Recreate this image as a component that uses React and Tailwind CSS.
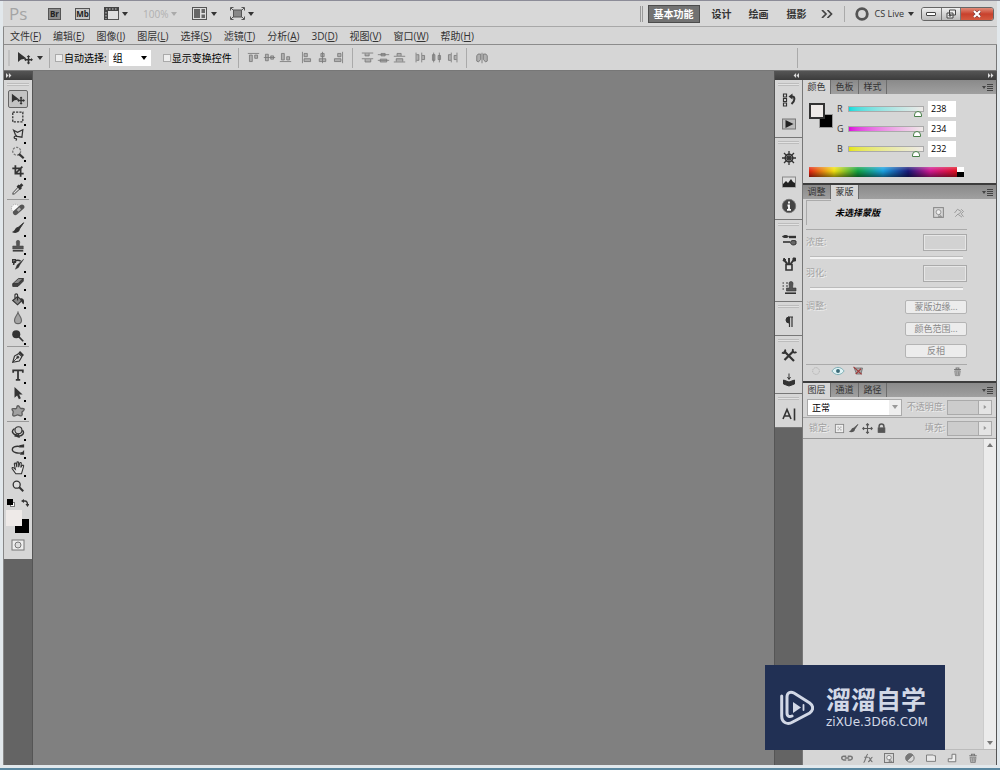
import { useState } from 'react';

const menus = [
  ['文件', 'F'],
  ['编辑', 'E'],
  ['图像', 'I'],
  ['图层', 'L'],
  ['选择', 'S'],
  ['滤镜', 'T'],
  ['分析', 'A'],
  ['3D', 'D'],
  ['视图', 'V'],
  ['窗口', 'W'],
  ['帮助', 'H']
];

const icons = {
  move: (
    <>
      <path d="M1 2v10l3-2.500 5.500-1z" fill="currentColor" stroke="none" />
      <path d="M11.500 6v7.500M8 9.700h7" strokeWidth="1.500" />
      <path d="M11.500 5l1.800 2h-3.600zM11.500 14.600l1.800-2h-3.600zM7 9.700l2-1.600v3.200zM16 9.700l-2-1.600v3.200z" fill="currentColor" stroke="none" />
    </>
  ),
  marquee: <rect x="2" y="2.500" width="11.500" height="11" strokeDasharray="2.500 1.300" strokeWidth="1.500" />,
  lasso: <path d="M3 2.500l4.500 2.500L13.500 2l-1 8.500-5.500-1L5 7.500zM6.500 9.500C3 8.500 3 12 5 12s1.500 1 .5 2.500" strokeWidth="1.400" />,
  wand: (
    <>
      <circle cx="6.500" cy="6" r="4.500" strokeDasharray="2.500 1.500" strokeWidth="1.500" stroke="#777" />
      <path d="M9 9l5.500 5" strokeWidth="2.600" />
    </>
  ),
  crop: <path d="M5 1.500v9.500h9.500M1.500 5H11v9.500M6 10l7-7" strokeWidth="2" />,
  eyedropper: (
    <>
      <path d="M8.500 5.500l-6 6.500-.5 2 2-.5 6.500-6" fill="#ddd" />
      <path d="M7.500 4L11.500 8M9.500 6L13 2.500" strokeWidth="3.200" />
    </>
  ),
  heal: (
    <>
      <circle cx="5" cy="6" r="4.500" strokeDasharray="1.500 1" fill="#f8f8f8" stroke="#999" />
      <path d="M5 11L12.500 4.500" stroke="#555" strokeWidth="5.500" strokeLinecap="round" />
      <path d="M7.500 9l3-3" stroke="#aaa" strokeWidth="3" />
    </>
  ),
  brush: (
    <>
      <path d="M14.500 2L8 7.500l1.500 2z" fill="currentColor" />
      <path d="M8.500 7c-4-.5-3 4.500-7.500 5.500 4 2.500 9 .5 9-3z" fill="currentColor" stroke="none" />
    </>
  ),
  stamp: (
    <>
      <path d="M6 3.500a2 2 0 014 0L9.500 8H14v3.500H2V8h4.500z" fill="#555" stroke="#444" strokeWidth=".6" />
      <path d="M2 13.500h12" strokeWidth="1.700" />
    </>
  ),
  history: (
    <>
      <path d="M14.500 2.500L10 9l-1.500 3-3.500 2L7 9z" fill="currentColor" strokeWidth=".5" />
      <path d="M3 9c0-5 4-6 8-4.500M2 3h3v3H2z" strokeWidth="1.700" />
    </>
  ),
  eraser: (
    <>
      <path d="M2 10l6.500-6H14l-6 6z" fill="#888" />
      <path d="M2 10h6l6-6v3l-6 6H2z" fill="#444" />
    </>
  ),
  bucket: (
    <>
      <path d="M2 8.500L7.500 4l5 4.500-5 5z" fill="#888" strokeWidth="1.300" />
      <path d="M7.500 8.500V2.500a1.500 1.500 0 00-3 0V6" strokeWidth="1.300" />
      <path d="M11 6c4 0 4.500 3 3.500 7-2.500-1-2-4-4-5z" fill="currentColor" stroke="none" />
    </>
  ),
  blur: <path d="M8 1.500C7 5 4 7 4 10.500a4 4 0 008 0C12 7 9 5 8 1.500z" fill="#a4a4a4" stroke="#666" strokeWidth="1.300" />,
  dodge: (
    <>
      <circle cx="6" cy="6" r="4.600" fill="currentColor" stroke="none" />
      <path d="M8.500 8.500L14 14" strokeWidth="1.900" />
    </>
  ),
  pen: (
    <>
      <path d="M2 14l2-7 5-3 3.500 3.500-3 5z" fill="#d9d9d9" strokeWidth="1.300" />
      <path d="M2 14l5.500-5.500" />
      <path d="M9.500 2l4.500 4.500" strokeWidth="2.400" />
      <circle cx="7.800" cy="8.200" r="1.200" fill="currentColor" />
    </>
  ),
  type: <path d="M2.500 5.500V2.800h11v2.700M8 3v10.500M5.500 13.500h5" strokeWidth="2" />,
  arrow: <path d="M4 1v12.500l3-2.700 2 4.200 2.300-1-2-4.200h4z" fill="currentColor" stroke="none" />,
  shape: <path d="M8 2c2 0 1.500 2.500 3 3s4.500-.5 4 1.500-3 2-2.500 3.500.5 4-1.500 3.500S9 12.500 7.500 12.500s-3.500 2-5 1 .5-4 0-5-2-2-1-3 3.300.5 4.500-.3S6 2 8 2z" fill="#a0a0a0" stroke="#5c5c5c" strokeWidth="1.500" />,
  rotate3d: (
    <>
      <circle cx="8.500" cy="6" r="4" fill="#ccc" strokeWidth="1.300" />
      <path d="M4 4C-.5 7 2 11 7 11.500M13 6c3 3 0 7-4.500 6.500M4 12.500h5M9 10l-2 3 3 1" strokeWidth="1.600" />
    </>
  ),
  camera3d: (
    <>
      <path d="M10 4C5 3 1 5 1.500 8c.5 3 7 4.500 11 3" strokeWidth="1.600" />
      <path d="M9.500 2.500l5.500-1v3.500H9.500z" fill="currentColor" stroke="none" />
      <path d="M15 8v5.500h-5z" fill="currentColor" stroke="none" />
    </>
  ),
  hand: <path d="M5.500 14.500L1.500 9c-1-1.600.8-2.200 1.700-1L5 9.500 3.800 3.500c-.2-1.500 1.700-1.600 2-.2L6.700 7V2c0-1.300 1.900-1.300 2 0L8.800 7l1.200-4.500c.3-1.300 2-1 1.800.4L11.200 7.500l1.500-2.300c.8-1 2.200-.3 1.700.9L12 14.500z" fill="#e4e4e4" strokeWidth="1.200" />,
  zoom: (
    <>
      <circle cx="6.500" cy="6.500" r="4" fill="#ddd" strokeWidth="1.500" />
      <path d="M9.500 9.500L14 14" strokeWidth="2.300" />
    </>
  ),
  mask: (
    <>
      <rect x="2" y="3" width="12" height="10" fill="#eee" stroke="#777" />
      <circle cx="8" cy="8" r="3" fill="#ddd" stroke="#777" />
    </>
  ),
  states: (
    <>
      <path d="M2.500 2h3v3h-3zM2.500 6.500h3v3h-3zM2.500 11h3v3h-3z" fill="#ddd" strokeWidth="1.200" />
      <path d="M10 4.500h1c3 0 3.500 4-.5 7.500" strokeWidth="2" />
      <path d="M11.500 1.500L7.500 4.500l4 3z" fill="currentColor" stroke="none" />
    </>
  ),
  play: (
    <>
      <rect x="1.500" y="3" width="13" height="10" fill="#bbb" stroke="#777" />
      <path d="M4.500 4v8L12.500 8z" fill="#222" stroke="none" />
    </>
  ),
  wheel: (
    <>
      <circle cx="8" cy="8" r="3.800" strokeWidth="1.500" />
      <path d="M8 1v14M1 8h14M3 3l10 10M13 3L3 13" strokeWidth="1.300" />
    </>
  ),
  histogram: (
    <>
      <rect x="1.500" y="3" width="13" height="10" fill="#ddd" stroke="#888" />
      <path d="M2 13v-3l3-3 2 2 3-4 2 3 2 1v4z" fill="#222" stroke="none" />
    </>
  ),
  info: (
    <>
      <circle cx="8" cy="8" r="6.700" fill="#444" stroke="#777" />
      <path d="M8 3.500v2M6.500 7.500H8v4M6 11.800h4" stroke="#fff" strokeWidth="1.800" />
    </>
  ),
  brushes: (
    <>
      <path d="M1 4.500C3 2.500 6 2.500 8 4.500c-2 2-5 2-7 0z" fill="currentColor" stroke="none" />
      <path d="M8 5h7" strokeWidth="2.400" />
      <path d="M2 10h7" strokeWidth="1.600" />
      <path d="M15 9c-3-1-5.500-.5-5.500 1.500S12.500 14 15 12z" strokeWidth="1" fill="#666" />
    </>
  ),
  presets: (
    <>
      <path d="M5 8.500h6V14H5z" fill="#ddd" strokeWidth="1.600" />
      <path d="M6.500 8L3 4M8 8V2M9.500 8L13 3.500" strokeWidth="1.900" />
      <path d="M2 5l1-3 2 2zM12 2h2.500v3H12z" fill="currentColor" />
    </>
  ),
  cloneSource: (
    <>
      <path d="M1.500 3h1.500M5 3h2M1.500 6h1.500M5 6h2M1.500 9h1.500" />
      <path d="M8 3.500a2 2 0 014 0L11.500 8H15v3H5.500V8h3z" fill="#555" strokeWidth=".6" />
      <path d="M4 13.200h11" strokeWidth="1.600" />
    </>
  ),
  paragraph: (
    <>
      <path d="M8 3a3 3 0 000 6z" fill="currentColor" />
      <path d="M8.500 3v10M11 3v10M7 3h5" strokeWidth="1.200" />
    </>
  ),
  toolPresets: (
    <>
      <path d="M3 3l10 10M12.500 3L3.500 12" strokeWidth="2.200" />
      <path d="M1 4.500C3 6 5 4 4 1.500M15.500 4c-2 1.500-4.500 0-3.500-3" strokeWidth="1.800" />
    </>
  ),
  book: (
    <>
      <path d="M2.500 8l5.500 2 5.500-2v4L8 14l-5.500-2z" fill="currentColor" />
      <path d="M8 1.500V7M6.500 5L8 7.500 9.500 5" />
    </>
  ),
  character: <path d="M2 13L6 3.500 10 13M3.500 10h5M13.500 2.500v12" strokeWidth="1.600" />,
  alignTop: <path d="M1 3h14M3 5h3.500v8H3zM9.500 5H13v4H9.500z" />,
  alignMiddle: <path d="M1 8h14M3 4h3.500v8H3zM9.500 6H13v4H9.500z" />,
  alignBottom: <path d="M1 13h14M3 3h3.500v8H3zM9.500 7H13v4H9.500z" />,
  alignLeft: <path d="M3 1v14M5 3h4v4H5zM5 9.500h8V13H5z" />,
  alignCenter: <path d="M8 1v14M6 3h4v4H6zM4 9.500h8V13H4z" />,
  alignRight: <path d="M13 1v14M7 3h4v4H7zM3 9.500h8V13H3z" />,
  distTop: <path d="M1 2.500h14M1 9.500h14M5 3v3h5V3M5 10v3.500h7V10" />,
  distMiddle: <path d="M1 4.500h14M1 11.500h14M5 3h5v3H5zM4 10h8v3.500H4z" />,
  distBottom: <path d="M1 6.500h14M1 13.500h14M5 6V3h5v3M4 13v-3.500h8V13" />,
  distLeft: <path d="M2.500 2v12M9.500 2v12M3 4.500h3v7H3M10 5.500h3v5h-3" />,
  distCenter: <path d="M4.500 2v12M11.500 2v12M3 4.500h3v7H3zM10 5.500h3v5h-3z" />,
  distRight: <path d="M6.500 2v12M13.500 2v12M6 4.500H3v7h3M13 5.500h-3v5h3" />,
  autoAlign: <path d="M8 2v12M6.500 3.500h-3L2 5.500v6l2 1 2.500-3zM9.500 3.500h3L14 5.500v6l-2 1-2.500-3z" />,
  vectorMask: <path d="M2 8l4-5 5 3-4 4 5 3.500M3 13l4-4M11 3l3 3-3 3 3 4" />,
  pixelMask: (
    <>
      <rect x="2" y="2" width="12" height="12" strokeWidth="1.300" />
      <circle cx="8" cy="7.500" r="3" fill="#eee" />
      <path d="M9 10l3 3h-4z" />
    </>
  ),
  ring: <circle cx="8" cy="8" r="4.500" strokeDasharray="2 1" />,
  eye: (
    <>
      <path d="M1 8c4-5.500 10-5.500 14 0-4 5.500-10 5.500-14 0z" fill="#dff3f5" stroke="#75a9b0" />
      <circle cx="8" cy="8" r="2.200" fill="#3a6a78" stroke="none" />
    </>
  ),
  discard: (
    <>
      <path d="M3 4h11l-2 8H6z" fill="#aaa" stroke="#666" />
      <path d="M2 2.500l11 10M12 5l-7 7" stroke="#a03a3a" strokeWidth="1.500" />
    </>
  ),
  trash: (
    <>
      <path d="M3 5h10M6 5V3h4v2" strokeWidth="1.500" />
      <path d="M4 7h8l-1 7H5zM7 8v5M9.500 8v5" fill="#bbb" />
    </>
  ),
  lockPixels: (
    <>
      <rect x="2" y="2" width="12" height="12" fill="#eee" strokeWidth="1.300" />
      <path d="M5 5h2v2H5zM9 5h2v2H9zM7 7h2v2H7zM5 9h2v2H5zM9 9h2v2H9z" fill="#aaa" stroke="none" />
    </>
  ),
  cross: <path d="M8 1v14M1 8h14M6 3l2-2 2 2M6 13l2 2 2-2M3 6L1 8l2 2M13 6l2 2-2 2" strokeWidth="1.600" />,
  lock: (
    <>
      <path d="M4.500 7V5a3.500 3.500 0 017 0v2" strokeWidth="2.200" />
      <rect x="3" y="7" width="10" height="7" fill="currentColor" />
    </>
  ),
  link: <path d="M7 5.500H3.500a2.500 2.500 0 000 5H7M9 5.500h3.500a2.500 2.500 0 010 5H9M5 8h6" strokeWidth="2" />,
  fx: <path d="M2 14c2.500 0 3-11 6-11M3 7h5M8.500 7c2.500 0 2.500 6 5.500 6M14 7c-2.500 0-3 6-6 6" strokeWidth="1.600" />,
  adjust: (
    <>
      <circle cx="8" cy="8" r="5.500" strokeWidth="1.300" />
      <path d="M4 12a5.500 5.500 0 018-8z" fill="currentColor" />
    </>
  ),
  folder: <path d="M2 4h9l1 1h2v7.500H2z" fill="#e8e8e8" strokeWidth="1.200" />,
  newLayer: <path d="M3 9h5V3h5v10H3z" fill="#eee" strokeWidth="1.300" />
};

const Icon = ({ name, className = 'size-4', fill = 'none' }) => (
  <svg viewBox="0 0 16 16" className={`${className} shrink-0`} fill={fill} stroke="currentColor" strokeWidth="1" aria-hidden="true">
    {icons[name]}
  </svg>
);

const Caret = ({ className = 'text-[#333]' }) => (
  <svg viewBox="0 0 6 4" className={`w-[6px] h-1 shrink-0 ${className}`} fill="currentColor" aria-hidden="true">
    <path d="M0 0h6L3 4z" />
  </svg>
);

const DoubleArrow = ({ left }) => (
  <svg viewBox="0 0 8 6" className={`w-[7px] h-[5px] ${left ? 'rotate-180' : ''}`} fill="#ddd" aria-hidden="true">
    <path d="M1 0l3 3-3 3zM4.500 0l3 3-3 3z" />
  </svg>
);

const Grip = () => <div className="h-[3px] border-y border-[#bcbcbc] bg-[#e2e2e2]" />;

const toolGroups = [
  ['move', 'marquee', 'lasso', 'wand', 'crop', 'eyedropper'],
  ['heal', 'brush', 'stamp', 'history', 'eraser', 'bucket', 'blur', 'dodge'],
  ['pen', 'type', 'arrow', 'shape'],
  ['rotate3d', 'camera3d', 'hand', 'zoom']
];

const dockGroups = [
  ['states', 'play'],
  ['wheel', 'histogram', 'info'],
  ['brushes', 'presets', 'cloneSource'],
  ['paragraph'],
  ['toolPresets', 'book'],
  ['character']
];

const alignGroups = [
  ['alignTop', 'alignMiddle', 'alignBottom'],
  ['alignLeft', 'alignCenter', 'alignRight'],
  ['distTop', 'distMiddle', 'distBottom'],
  ['distLeft', 'distCenter', 'distRight']
];

const TitleBar = () => (
  <header className="flex h-[26px] shrink-0 items-center border-b border-[#a8a8a8] bg-[#d8d8d8] pl-[6px] pr-[3px]">
    <span className="w-[39px] text-[17px] leading-5 text-[#a4a4a4]">Ps</span>
    <button className="h-[12px] w-[13px] border border-[#555] bg-[#8c8c8c] text-[8px] leading-[10px] font-bold text-[#222]">Br</button>
    <button className="ml-[14px] h-[12px] w-[15px] border border-[#555] bg-[#c4c4c4] text-[8px] leading-[10px] font-bold text-[#222]">Mb</button>
    <button className="ml-[14px] flex items-center gap-[3px]" aria-label="查看额外内容">
      <svg viewBox="0 0 15 13" className="h-[13px] w-[15px]" aria-hidden="true">
        <rect x=".5" y=".5" width="14" height="12" fill="#e0e0e0" stroke="#555" />
        <path d="M0 0h15v4H0zM0 4h4v9H0z" fill="#444" />
        <path d="M2 2h11M2 5v7" stroke="#ccc" strokeDasharray="1.500 1.500" />
      </svg>
      <Caret />
    </button>
    <button className="ml-[15px] flex items-center gap-[3px] text-[#b0b0b0]">
      100%
      <Caret className="text-[#aaa]" />
    </button>
    <button className="ml-[15px] flex items-center gap-1" aria-label="排列文档">
      <svg viewBox="0 0 15 13" className="h-[13px] w-[15px]" aria-hidden="true">
        <rect x=".5" y=".5" width="14" height="12" fill="#ddd" stroke="#555" />
        <path d="M2 2h6v9H2zM9.500 2H13v4H9.500zM9.500 7.500H13V11H9.500z" fill="#666" />
      </svg>
      <Caret />
    </button>
    <button className="ml-[13px] flex items-center gap-[3px]" aria-label="屏幕模式">
      <svg viewBox="0 0 15 13" className="h-[13px] w-[15px]" fill="none" stroke="#555" aria-hidden="true">
        <rect x="3.500" y="3" width="8" height="7" fill="#888" />
        <path d="M.5 3.500v-3h3M11.500.5h3v3M.5 9.500v3h3M11.500 12.500h3v-3M1 1l2 2M14 1l-2 2M1 12l2-2M14 12l-2-2" />
      </svg>
      <Caret />
    </button>

    <div className="ml-auto h-4 w-[3px] border-x border-[#999]" />
    <nav className="flex items-center font-bold">
      <button className="ml-[5px] mr-[12px] h-[18px] w-[52px] border border-[#4c4c4c] bg-[#727272] text-white">基本功能</button>
      <button className="mr-[17px]">设计</button>
      <button className="mr-[18px]">绘画</button>
      <button className="mr-[14px]">摄影</button>
    </nav>
    <svg viewBox="0 0 12 8" className="mr-[11px] h-2 w-3" fill="none" stroke="#444" strokeWidth="1.700" aria-hidden="true">
      <path d="M1 0l4 4-4 4M6.500 0l4 4-4 4" />
    </svg>
    <div className="h-4 w-px bg-[#aaa]" />
    <button className="ml-[10px] flex items-center gap-1 text-[9px]">
      <svg viewBox="0 0 14 14" className="mr-[2px] size-[14px]" aria-hidden="true">
        <circle cx="7" cy="7" r="5.300" fill="none" stroke="#555" strokeWidth="2.800" />
      </svg>
      CS Live
      <Caret />
    </button>
    <div className="ml-[7px] flex h-[14px] w-[73px] overflow-hidden rounded-[3px] border border-[#666]">
      <button className="flex flex-1 items-center justify-center border-r border-[#777] bg-linear-to-b from-[#eee] to-[#bbb]" aria-label="最小化">
        <span className="h-1 w-[10px] rounded-[1px] border border-[#444] bg-white" />
      </button>
      <button className="flex flex-1 items-center justify-center border-r border-[#777] bg-linear-to-b from-[#eee] to-[#bbb]" aria-label="还原">
        <svg viewBox="0 0 10 10" className="size-[10px]" fill="#eee" stroke="#444" aria-hidden="true">
          <path d="M3.500 1h6v5h-6zM1 4h6v5H1zM3 6h2v1H3z" />
        </svg>
      </button>
      <button className="flex w-8 items-center justify-center bg-linear-to-b from-[#e08a78] via-[#c8402c] to-[#d45a40]" aria-label="关闭">
        <svg viewBox="0 0 10 8" className="h-2 w-[10px]" fill="none" aria-hidden="true">
          <path d="M2 1l6 6M8 1L2 7" stroke="#733" strokeWidth="3.200" />
          <path d="M2 1l6 6M8 1L2 7" stroke="#fff" strokeWidth="2.200" />
        </svg>
      </button>
    </div>
  </header>
);

const MenuBar = () => (
  <nav className="flex h-[18px] shrink-0 items-center gap-[12px] border-b border-[#8c8c8c] pl-[6px]">
    {menus.map(([label, key]) => (
      <button key={key} className="whitespace-nowrap leading-4">
        {label}(<u>{key}</u>)
      </button>
    ))}
  </nav>
);

const Check = ({ id, label }) => (
  <div className="flex items-center gap-px">
    <input id={id} type="checkbox" className="size-2 appearance-none border border-[#aaa] bg-[#eee] checked:bg-[#555]" />
    <label htmlFor={id} className="whitespace-nowrap text-black">{label}</label>
  </div>
);

const Divider = () => <div className="h-[20px] w-px shrink-0 bg-[#aaa]" />;

const OptionsBar = () => (
  <div className="flex h-[26px] shrink-0 items-center border-r border-b border-[#777] pl-1">
    <div className="mr-[7px] h-4 w-[2px] bg-[#c2c2c2]" />
    <Icon name="move" className="mr-[4px] size-4" />
    <Caret />
    <div className="mr-[5px] ml-[6px]"><Divider /></div>
    <Check id="auto-select" label="自动选择:" />
    <div className="relative mr-[12px] ml-[2px]">
      <select aria-label="自动选择对象" className="block h-4 w-[42px] appearance-none bg-white pl-1 text-black">
        <option>组</option>
        <option>图层</option>
      </select>
      <div className="pointer-events-none absolute inset-y-0 right-1 flex items-center"><Caret className="text-black" /></div>
    </div>
    <Check id="show-transform" label="显示变换控件" />
    <div className="mr-2 ml-[6px]"><Divider /></div>
    {alignGroups.map((group, i) => (
      <div key={group[0]} className="flex items-center">
        {i === 2 && <div className="mr-2 ml-[4px]"><Divider /></div>}
        {i % 2 === 1 && <div className="w-[5px]" />}
        {group.map((name) => (
          <button key={name} className="flex w-4 items-center text-[#777]" aria-label={name}>
            <Icon name={name} fill="#b0b0b0" className="size-[13px]" />
          </button>
        ))}
      </div>
    ))}
    <div className="mr-2 ml-[4px]"><Divider /></div>
    <button className="text-[#777]" aria-label="autoAlign"><Icon name="autoAlign" fill="#b0b0b0" className="size-[14px]" /></button>
    <div className="mr-[198px] ml-auto"><Divider /></div>
  </div>
);

const ToolBox = () => {
  const [active, setActive] = useState('move');
  return (
    <aside className="flex w-[29px] shrink-0 flex-col border-r border-[#555] bg-[#646464]">
      <div className="flex h-[9px] items-center bg-linear-to-b from-[#555] to-[#3c3c3c] pl-[1px]"><DoubleArrow /></div>
      <div className="bg-[#d6d6d6] pb-[6px]">
        <div className="px-[3px] pt-[3px] pb-[4px]"><Grip /></div>
        {toolGroups.map((group, i) => (
          <div key={group[0]}>
            {i > 0 && <div className="mx-[3px] my-px h-px bg-[#999]" />}
            {group.map((name) => (
              <button
                key={name}
                aria-label={name}
                onClick={() => setActive(name)}
                className={`relative mx-auto flex h-[18px] w-5 items-center justify-center ${
                  active === name ? 'rounded-[2px] border border-[#666] bg-[#c4c4c4]' : ''
                }`}
              >
                <Icon name={name} className="size-[14px]" />
                {name !== 'move' && name !== 'zoom' && <span className="absolute right-[2px] bottom-0 size-[2px] bg-black" />}
              </button>
            ))}
          </div>
        ))}
        <div className="flex h-[15px] items-center justify-between px-[3px]">
          <button className="relative size-2" aria-label="默认颜色">
            <span className="absolute right-0 bottom-0 size-[5px] border border-[#777] bg-white" />
            <span className="absolute top-0 left-0 size-[6px] bg-black" />
          </button>
          <svg viewBox="0 0 8 8" className="size-2" fill="none" stroke="#333" aria-hidden="true">
            <path d="M2 2h2c2 0 2.500 1 2.500 4" strokeWidth="1.300" />
            <path d="M0 2l3-2v4zM6.500 8l-2-3h4z" fill="#333" stroke="none" />
          </svg>
        </div>
        {/* foreground / background */}
        <div className="relative ml-[2px] h-[23px] w-[23px]">
          <div className="absolute right-0 bottom-0 size-[14px] bg-black" />
          <div className="absolute top-0 left-0 size-4 bg-[#eeeae8]" />
        </div>
        <button className="mx-auto mt-1 flex" aria-label="快速蒙版"><Icon name="mask" /></button>
      </div>
    </aside>
  );
};

const Dock = () => (
  <div className="w-[28px] shrink-0 border-r border-[#777]">
    {dockGroups.map((group) => (
      <div key={group[0]} className="border-b border-[#777] bg-[#d6d6d6] pb-px">
        <div className="px-[3px] pt-[3px] pb-[2px]"><Grip /></div>
        {group.map((name) => (
          <button key={name} className="flex h-6 w-full items-center justify-center" aria-label={name}>
            <Icon name={name} />
          </button>
        ))}
      </div>
    ))}
  </div>
);

const PanelTabs = ({ tabs, active, dark }) => (
  <div className={`flex h-[14px] shrink-0 items-stretch bg-linear-to-b from-[#8a8a8a] to-[#a0a0a0] ${dark ? 'box-content border-t-2 border-[#3c3c3c]' : ''}`}>
    {tabs.map((tab) => (
      <button
        key={tab}
        className={`w-7 border-r border-[#6c6c6c] text-[9px] leading-[14px] ${tab === active ? 'bg-[#d6d6d6]' : 'text-[#333]'}`}
      >
        {tab}
      </button>
    ))}
    <button className="mr-[3px] ml-auto flex items-center" aria-label="面板菜单">
      <svg viewBox="0 0 11 7" className="h-[7px] w-[11px]" fill="#444" aria-hidden="true">
        <path d="M0 2h4L2 5zM5 0h6v1H5zM5 2h6v1H5zM5 4h6v1H5zM5 6h6v1H5z" />
      </svg>
    </button>
  </div>
);

const channels = [
  { name: 'R', value: 238, track: 'from-[#00dcdc] to-[#eeeae8]' },
  { name: 'G', value: 234, track: 'from-[#dc00dc] to-[#eeeae8]' },
  { name: 'B', value: 232, track: 'from-[#e6e600] to-[#eeeae8]' }
];

const ColorPanel = () => {
  const [rgb, setRgb] = useState(channels.map((c) => c.value));
  const update = (i, v) => setRgb(rgb.map((old, j) => (j === i ? Number(v) || 0 : old)));

  return (
    <section>
      <PanelTabs tabs={['颜色', '色板', '样式']} active="颜色" />
      <div className="h-[89px] pt-[5px] pl-[6px]">
        <div className="flex">
          <div className="relative mt-[4px] mr-[4px] h-[25px] w-6 shrink-0">
            <div className="absolute right-0 bottom-0 size-[14px] border border-[#999] bg-black" />
            <div className="absolute top-0 left-0 size-4 border-2 border-[#333]" style={{ background: `rgb(${rgb.join(',')})` }} />
          </div>
          <div>
            {channels.map((c, i) => (
              <div key={c.name} className="flex h-[20px] items-center">
                <label htmlFor={`ch-${c.name}`} className="w-[11px] text-[9px]">{c.name}</label>
                <div className={`relative mr-1 h-[6px] w-[76px] border border-[#aaa] bg-linear-to-r ${c.track}`}>
                  <input
                    type="range"
                    min="0"
                    max="255"
                    value={rgb[i]}
                    onChange={(e) => update(i, e.target.value)}
                    aria-label={`${c.name} 滑块`}
                    className="absolute -left-1 top-1 h-[6px] w-[82px] appearance-none bg-transparent [&::-webkit-slider-thumb]:h-[6px] [&::-webkit-slider-thumb]:w-2 [&::-webkit-slider-thumb]:appearance-none [&::-webkit-slider-thumb]:rounded-t-full [&::-webkit-slider-thumb]:border [&::-webkit-slider-thumb]:border-[#4a804a] [&::-webkit-slider-thumb]:bg-white"
                  />
                </div>
                <input
                  id={`ch-${c.name}`}
                  value={rgb[i]}
                  onChange={(e) => update(i, e.target.value)}
                  className="h-4 w-7 bg-white pl-[3px] text-[9px] text-black"
                />
              </div>
            ))}
          </div>
        </div>
        <div className="mt-[8px] flex h-[10px] w-[155px]">
          <div className="flex-1 bg-[linear-gradient(to_bottom,rgba(255,255,255,.25),transparent_40%,rgba(0,0,0,.45)),linear-gradient(to_right,#e02010,#f0e010_17%,#10a040_33%,#18a0e0_50%,#181878_67%,#d01890_82%,#e01020)]" />
          <div className="w-[7px] bg-black"><div className="h-[5px] bg-white" /></div>
        </div>
      </div>
    </section>
  );
};

const MaskSlider = ({ id, label }) => (
  <div className="h-[31px]">
    <div className="flex h-[18px] items-center justify-between">
      <label htmlFor={id} className="text-[9px] text-[#a4a4a4] text-shadow-[1px_1px_0_#eee]">{label}</label>
      <input id={id} disabled className="h-[17px] w-11 border border-[#aaa] bg-[#d2d2d2] outline outline-[#e6e6e6] -outline-offset-2" />
    </div>
    <div className="mx-1 mt-[5px] h-[3px] border-t border-[#bbb] bg-[#f2f2f2]" />
  </div>
);

const MaskPanel = () => (
  <section>
    <PanelTabs tabs={['调整', '蒙版']} active="蒙版" dark />
    <div className="h-[182px] w-[164px] pt-px pl-[3px]">
      <div className="flex h-[30px] items-center border-b border-[#aaa] pb-1">
        <div className="size-[25px] border-t border-l border-[#aaa]" />
        <strong className="ml-[4px] text-[9px] text-black italic">未选择蒙版</strong>
        <button disabled className="ml-auto text-[#888]" aria-label="像素蒙版"><Icon name="pixelMask" className="size-[13px]" /></button>
        <button disabled className="mr-[2px] ml-[8px] text-[#888]" aria-label="矢量蒙版"><Icon name="vectorMask" className="size-3" /></button>
      </div>
      <div className="pt-[3px]">
        <MaskSlider id="density" label="浓度:" />
        <MaskSlider id="feather" label="羽化:" />
      </div>
      <div className="flex justify-between pt-[5px]">
        <span className="text-[9px] leading-3 text-[#a4a4a4] text-shadow-[1px_1px_0_#eee]">调整:</span>
        <div className="flex flex-col gap-2">
          {['蒙版边缘...', '颜色范围...', '反相'].map((label) => (
            <button key={label} disabled className="h-[14px] w-[62px] rounded-[2px] border border-[#b4b4b4] bg-[#ececec] text-[9px] leading-3 text-[#888]">
              {label}
            </button>
          ))}
        </div>
      </div>
      <div className="mt-[6px] flex h-[13px] items-center border-t border-[#aaa] pl-1 text-[#aaa]">
        <Icon name="ring" className="mr-[9px] size-3" />
        <Icon name="eye" className="mr-[7px] size-[14px]" />
        <Icon name="discard" className="size-3" />
        <Icon name="trash" className="mr-1 ml-auto size-[11px] text-[#777]" />
      </div>
    </div>
  </section>
);

const NumberField = ({ id, label }) => (
  <>
    <label htmlFor={id} className="ml-auto mr-[2px] whitespace-nowrap text-[9px] text-[#a0a0a0] text-shadow-[1px_1px_0_#eee]">{label}</label>
    <input id={id} disabled className="h-[15px] w-8 border border-[#aaa] bg-[#ccc]" />
    <button disabled className="flex h-[15px] w-[13px] items-center justify-center border border-l-0 border-[#aaa] bg-[#e4e4e4]" aria-label={`${label} 弹出滑块`}>
      <Caret className="-rotate-90 text-[#999] scale-75" />
    </button>
  </>
);

const LayersPanel = () => (
  <section className="flex flex-1 flex-col">
    <PanelTabs tabs={['图层', '通道', '路径']} active="图层" dark />
    <div className="flex h-[21px] items-center border-b border-[#aaa] pr-[4px] pl-1">
      <div className="relative">
        <select aria-label="混合模式" className="block h-[17px] w-[95px] appearance-none border border-[#aaa] bg-white pl-1 text-[9px] text-black">
          <option>正常</option>
          <option>溶解</option>
        </select>
        <div className="pointer-events-none absolute inset-y-px right-px flex w-[12px] items-center justify-center bg-[#eee]">
          <Caret className="text-[#999]" />
        </div>
      </div>
      <NumberField id="opacity" label="不透明度:" />
    </div>
    <div className="flex h-[21px] items-center border-b border-[#999] pr-[4px] pl-[6px] text-[#555]">
      <span className="mr-[5px] text-[9px] text-[#a0a0a0] text-shadow-[1px_1px_0_#eee]">锁定:</span>
      <Icon name="lockPixels" className="mr-[3px] size-[11px] text-[#888]" />
      <Icon name="brush" className="mr-[3px] size-[11px]" />
      <Icon name="cross" className="mr-[3px] size-[11px]" />
      <Icon name="lock" className="size-[11px]" />
      <NumberField id="fill" label="填充:" />
    </div>
    <div className="flex flex-1">
      <div className="flex-1" />
      <div className="flex w-[13px] flex-col items-center justify-between border-l border-[#ccc] bg-[#ececec] py-[4px]">
        <Caret className="rotate-180 text-[#777]" />
        <Caret className="text-[#777]" />
      </div>
    </div>
    <footer className="flex h-4 items-center justify-end gap-[9px] border-t border-[#bbb] pr-[17px] text-[#777]">
      {['link', 'fx', 'pixelMask', 'adjust', 'folder', 'newLayer', 'trash'].map((name) => (
        <button key={name} aria-label={name}><Icon name={name} className="size-3" /></button>
      ))}
    </footer>
  </section>
);

const Watermark = () => (
  <div className="absolute right-[55px] bottom-5 flex h-[85px] w-[180px] items-center bg-[#213054] text-[#d2d8e6]">
    <svg viewBox="0 0 34 36" className="ml-[15px] mr-[12px] h-9 w-[34px] shrink-0" fill="none" stroke="currentColor" strokeWidth="3" strokeLinecap="round" aria-hidden="true">
      <path d="M1.700 6v20c0 7 6 9 11 6l17-9c4-3 4-7 0-10L14 3C10 1 7 3 7 7v16c0 4 3 4 5 3" />
      <path d="M13 12l8 5.500-8 5.500z" fill="currentColor" stroke="none" />
      <path d="M23.500 15v5" strokeWidth="1.800" />
    </svg>
    <div className="whitespace-nowrap">
      <div className="mb-[5px] text-[25px] leading-6 font-bold">溜溜自学</div>
      <div className="font-['DejaVu_Sans',sans-serif] text-[12px] leading-3">ziXUe.3D66.COM</div>
    </div>
  </div>
);

export default function App() {
  return (
    <div lang="zh-CN" className="relative flex min-h-screen flex-col border-t border-[#8c8c98] bg-[#5a87a0] pb-[2px] font-['Open_Sans','Noto_Sans_CJK_SC',sans-serif] text-[10px] leading-4 text-[#333]">
      <div className="flex flex-1 flex-col border-r-3 border-b-3 border-l-3 border-[#e2e8ec] bg-[#d6d6d6]">
        <TitleBar />
        <div className="flex flex-1 flex-col border-l border-[#888]">
          <MenuBar />
          <OptionsBar />
          <div className="flex flex-1">
            <ToolBox />
            <main className="flex-1 bg-[#808080]" />
            <div className="flex w-[223px] shrink-0 flex-col border-r border-l border-[#555] bg-[#646464]">
              <div className="flex h-[9px] items-center justify-between bg-linear-to-b from-[#555] to-[#3c3c3c] pr-[2px] pl-[18px]">
                <DoubleArrow left />
                <DoubleArrow />
              </div>
              <div className="flex flex-1">
                <Dock />
                <div className="flex flex-1 flex-col bg-[#d6d6d6]">
                  <ColorPanel />
                  <MaskPanel />
                  <LayersPanel />
                </div>
              </div>
            </div>
          </div>
        </div>
      </div>
      <Watermark />
    </div>
  );
}
